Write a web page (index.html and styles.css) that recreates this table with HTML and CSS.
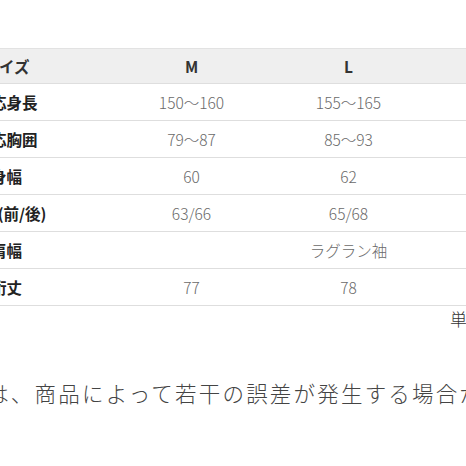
FILE: index.html
```html
<!DOCTYPE html>
<html lang="ja">
<head>
<meta charset="utf-8">
<link rel="stylesheet" href="styles.css">
</head>
<body>
<div class="page">
  <table class="size">
    <colgroup>
      <col class="c-label"><col class="c-size"><col class="c-size"><col class="c-size">
    </colgroup>
    <thead>
      <tr><th>サイズ</th><th>M</th><th>L</th><th>XL</th></tr>
    </thead>
    <tbody>
      <tr><th>適応身長</th><td>150～160</td><td>155～165</td><td>160～170</td></tr>
      <tr><th>適応胸囲</th><td>79～87</td><td>85～93</td><td>91～99</td></tr>
      <tr><th>身幅</th><td>60</td><td>62</td><td>64</td></tr>
      <tr><th>着丈(前/後)</th><td>63/66</td><td>65/68</td><td>67/70</td></tr>
      <tr><th>肩幅</th><td class="span" colspan="3">ラグラン袖</td></tr>
      <tr><th>裄丈</th><td>77</td><td>78</td><td>79</td></tr>
    </tbody>
  </table>
  <div class="unit">単位：cm</div>
  <p class="note">※サイズは、商品によって若干の誤差が発生する場合がございます。</p>
</div>
</body>
</html>
```

FILE: styles.css
```css
html, body {
  margin: 0;
  padding: 0;
  background: #fff;
}
body {
  width: 466px;
  height: 466px;
  overflow: hidden;
  font-family: "Noto Sans CJK JP", "Noto Sans", sans-serif;
}
.page {
  padding-top: 48px;
  white-space: nowrap;
}
.size {
  margin-left: -100px;
  width: 684px;
  table-layout: fixed;
  border-collapse: collapse;
  font-size: 15.5px;
}
.c-label { width: 213px; }
.c-size { width: 157px; }
.size th, .size td {
  padding: 0;
  text-align: center;
  border-top: 1px solid #f1f1f1;
  border-bottom: 1px solid #dedede;
}
.size thead tr {
  height: 35px;
  background: #efefef;
}
.size thead th {
  color: #333;
  font-weight: 700;
  border-top: 1px solid #e2e2e2;
}
.size tbody tr {
  height: 37px;
}
.size tbody th {
  color: #222;
  font-weight: 700;
}
.size td {
  color: #6a6a6a;
  font-weight: 300;
}
.unit {
  margin-top: 2px;
  padding-left: 450px;
  font-size: 17px;
  line-height: 22px;
  color: #333;
  font-weight: 300;
}
.note {
  margin: 49px 0 0 -107px;
  font-size: 21.5px;
  line-height: 28px;
  letter-spacing: 2.2px;
  color: #444;
  font-weight: 300;
}
```
